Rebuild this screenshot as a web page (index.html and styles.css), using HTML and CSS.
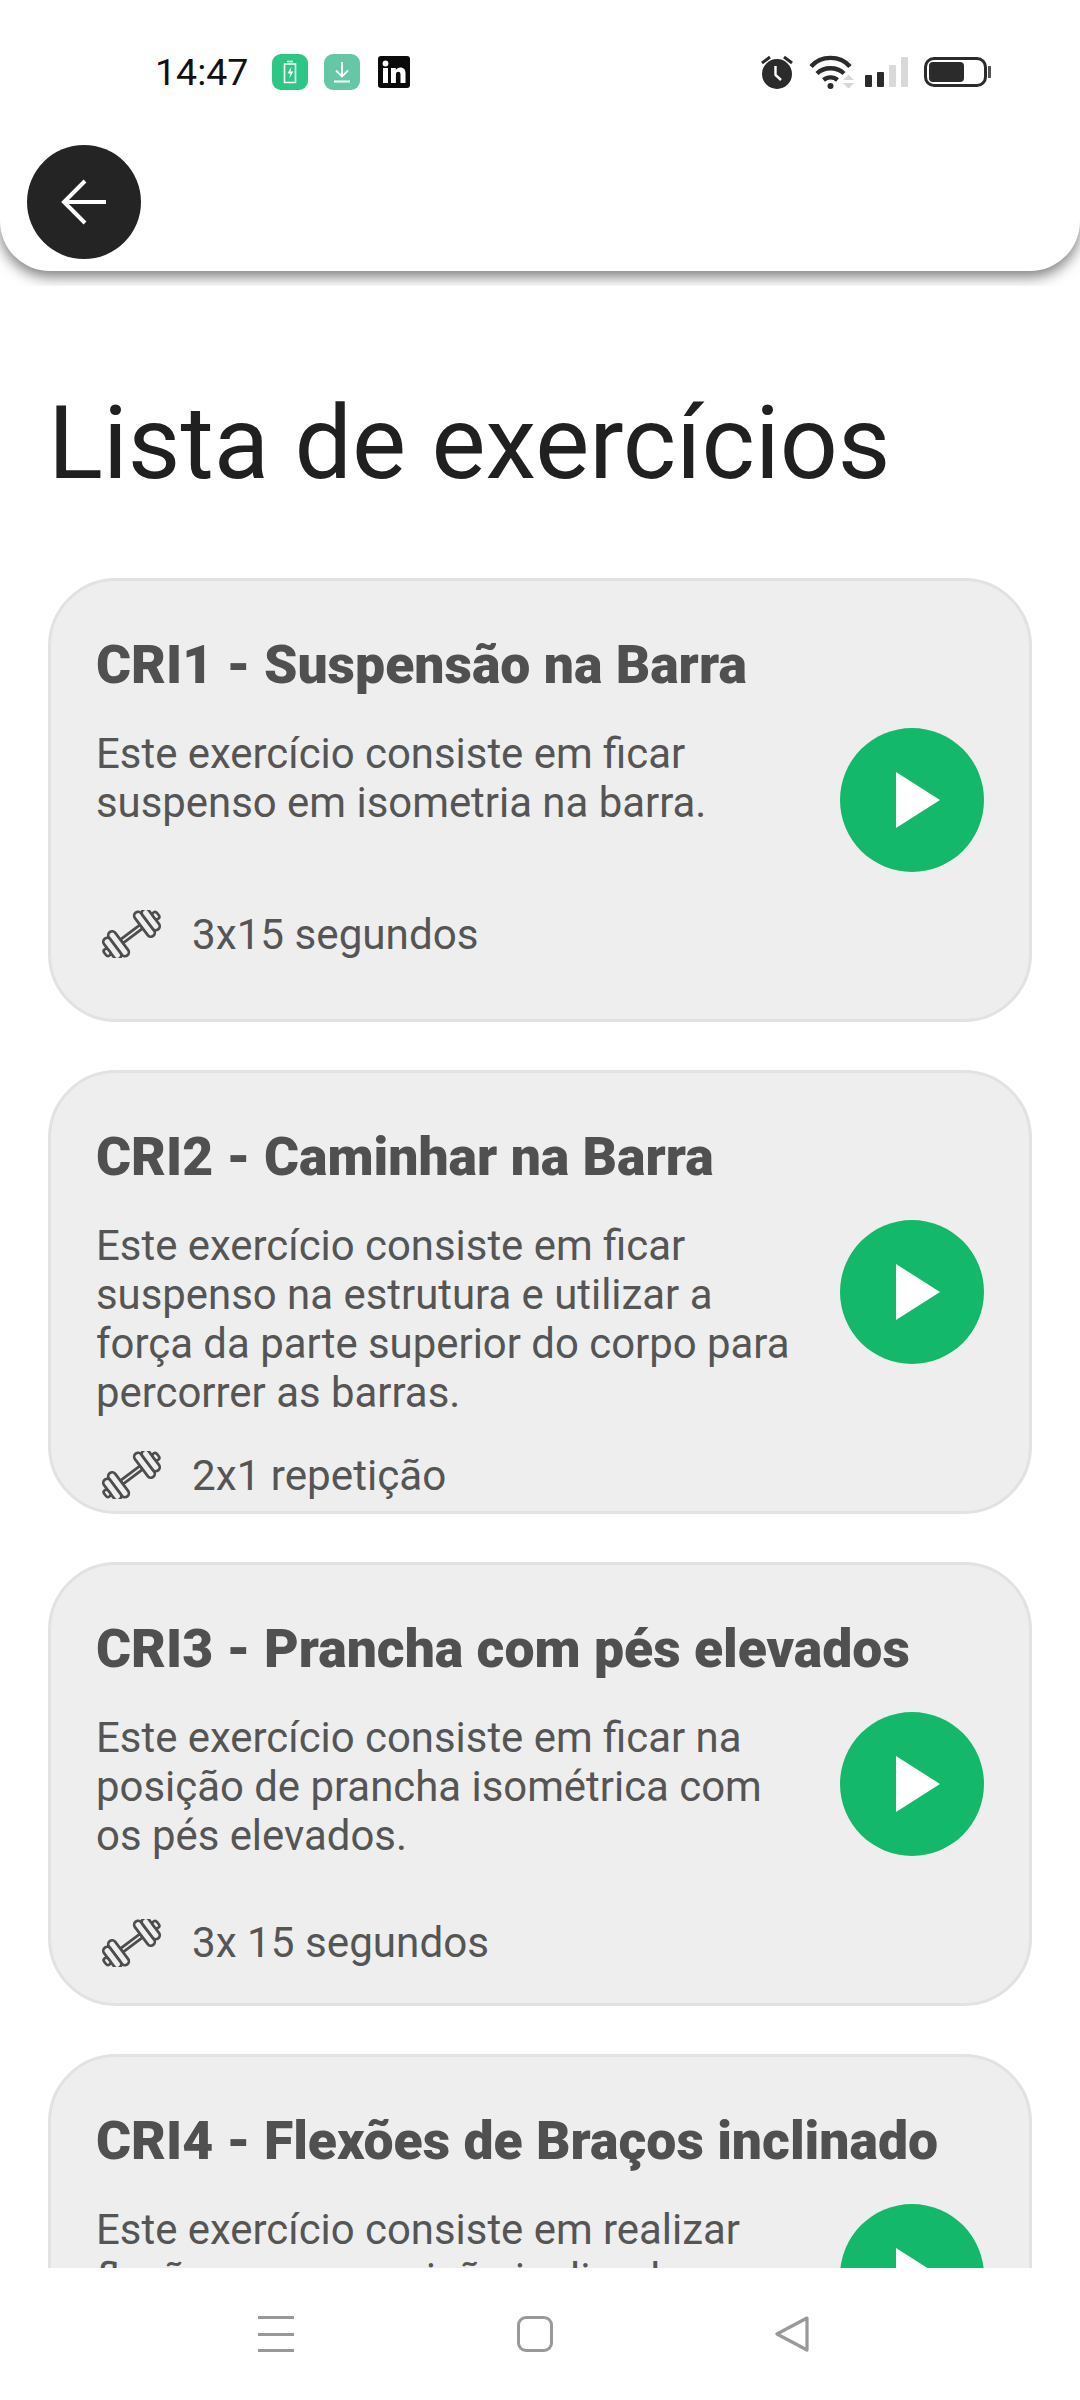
FILE: index.html
```html
<!DOCTYPE html>
<html lang="pt">
<head>
  <meta charset="UTF-8">
  <title>Lista de exercícios</title>
  <link rel="stylesheet" href="styles.css">
</head>
<body>
  <svg class="defs" width="0" height="0">
    <symbol id="halter" viewBox="0 0 60 48">
      <g transform="translate(29.500 24) rotate(-37) scale(1.12)" fill="none" stroke="#4d4d4d" stroke-width="2.400" stroke-linejoin="round">
        <rect x="-11" y="-2" width="22" height="4"/>
        <rect x="-18" y="-13" width="7" height="26" rx="3.500" fill="#eee"/>
        <rect x="-25" y="-11" width="7" height="22" rx="3.500" fill="#eee"/>
        <rect x="-29.500" y="-3.500" width="4.500" height="7" rx="2.200" fill="#eee"/>
        <rect x="11" y="-13" width="7" height="26" rx="3.500" fill="#eee"/>
        <rect x="18" y="-11" width="7" height="22" rx="3.500" fill="#eee"/>
        <rect x="25" y="-3.500" width="4.500" height="7" rx="2.200" fill="#eee"/>
      </g>
    </symbol>
    <symbol id="play" viewBox="0 0 144 144">
      <circle cx="72" cy="72" r="72" fill="#14b86a"/>
      <path d="M56 44 L100 72 L56 100 Z" fill="#fff"/>
    </symbol>
  </svg>

  <div class="app">
    <div class="top">
      <header class="header">
        <div class="status">
          <div class="status-left">
            <span class="time">14:47</span>
            <svg class="chip" width="36" height="36" viewBox="0 0 36 36">
              <rect width="36" height="36" rx="9" fill="#2cc785"/>
              <path d="M15 7.500h6M12.500 10h11v18.500h-11z" fill="none" stroke="#fff" stroke-width="1.600"/>
              <path d="M19.500 12.500l-4 7h2.800l-1 5 4-7h-2.800z" fill="#fff"/>
            </svg>
            <svg class="chip chip-down" width="36" height="36" viewBox="0 0 36 36">
              <rect width="36" height="36" rx="9" fill="#66c7a6"/>
              <path d="M18 8v14M12 16.500l6 6 6-6M10 27.500h16" fill="none" stroke="#fff" stroke-width="1.800"/>
            </svg>
            <svg class="chip chip-in" width="32" height="32" viewBox="0 0 32 32">
              <rect width="32" height="32" rx="3" fill="#0a0a0a"/>
              <rect x="5" y="12" width="5" height="15" fill="#fff"/>
              <circle cx="7.500" cy="7.500" r="2.900" fill="#fff"/>
              <path d="M13 12h4.800v2.200c.9-1.600 2.600-2.600 4.600-2.600 3.600 0 5.100 2.300 5.100 6V27h-5v-8.400c0-1.800-.6-2.900-2.200-2.900-1.700 0-2.400 1.200-2.400 2.900V27H13z" fill="#fff"/>
            </svg>
          </div>
          <div class="status-right">
            <svg width="34" height="34" viewBox="0 0 34 34">
              <circle cx="17" cy="19" r="15" fill="#2b2b2b"/>
              <path d="M15.500 11v9l5.500 5" fill="none" stroke="#fff" stroke-width="2.400"/>
              <path d="M2 8l8-6M32 8l-8-6" stroke="#2b2b2b" stroke-width="3"/>
            </svg>
            <svg class="wifi" width="41" height="34" viewBox="0 0 41 34">
              <path d="M1 11.500C11 0 30 0 40 11.500M7 18.500c7-7 20-7 27 0M13.500 25c4-3.500 10-3.500 14 0" fill="none" stroke="#2b2b2b" stroke-width="4.400"/>
              <circle cx="20.500" cy="31" r="3" fill="#2b2b2b"/>
              <path d="M33 25l5.500-5.500 5.500 5.500zM33 28l5.500 5.500 5.500-5.500z" fill="#d6d6d6"/>
            </svg>
            <div class="signal">
              <span class="bar bar1"></span>
              <span class="bar bar2"></span>
              <span class="bar bar3 off"></span>
              <span class="bar bar4 off"></span>
            </div>
            <div class="battery"><span class="battery-fill"></span></div>
          </div>
        </div>
        <button class="back">
          <svg width="48" height="48" viewBox="0 0 48 48">
            <path d="M3 24H46M25 3L4 24l21 21" fill="none" stroke="#fff" stroke-width="4"/>
          </svg>
        </button>
      </header>
    </div>

    <main class="content">
      <h1>Lista de exercícios</h1>

      <div class="card">
        <h2>CRI1 - Suspensão na Barra</h2>
        <p class="desc">Este exercício consiste em ficar suspenso em isometria na barra.</p>
        <div class="meta"><svg class="halter"><use href="#halter"/></svg><span>3x15 segundos</span></div>
        <svg class="play"><use href="#play"/></svg>
      </div>

      <div class="card">
        <h2>CRI2 - Caminhar na Barra</h2>
        <p class="desc">Este exercício consiste em ficar suspenso na estrutura e utilizar a força da parte superior do corpo para percorrer as barras.</p>
        <div class="meta"><svg class="halter"><use href="#halter"/></svg><span>2x1 repetição</span></div>
        <svg class="play"><use href="#play"/></svg>
      </div>

      <div class="card">
        <h2>CRI3 - Prancha com pés elevados</h2>
        <p class="desc">Este exercício consiste em ficar na posição de prancha isométrica com os pés elevados.</p>
        <div class="meta"><svg class="halter"><use href="#halter"/></svg><span>3x 15 segundos</span></div>
        <svg class="play"><use href="#play"/></svg>
      </div>

      <div class="card">
        <h2>CRI4 - Flexões de Braços inclinado</h2>
        <p class="desc">Este exercício consiste em realizar flexões numa posição inclinada.</p>
        <div class="meta"><svg class="halter"><use href="#halter"/></svg><span>3x10 repetições</span></div>
        <svg class="play"><use href="#play"/></svg>
      </div>
    </main>

    <nav class="navbar">
      <div class="nav-menu"><span></span><span></span><span></span></div>
      <div class="nav-home"></div>
      <svg width="34" height="36" viewBox="0 0 34 36">
        <path d="M32 2 L2 18 L32 34 Z" fill="none" stroke="#999" stroke-width="3.200" stroke-linejoin="round"/>
      </svg>
    </nav>
  </div>
</body>
</html>
```

FILE: styles.css
```css
* {
  box-sizing: border-box;
}

body {
  margin: 0;
  background: #fff;
  font-family: Roboto, sans-serif;
}

.defs {
  position: absolute;
}

.app {
  width: 1080px;
  height: 2400px;
  display: flex;
  flex-direction: column;
  overflow: hidden;
}

.top {
  height: 286px;
  flex: none;
  overflow: hidden;
}

.header {
  height: 271px;
  background: #fff;
  border-radius: 0 0 50px 50px;
  box-shadow: 0 6px 14px rgba(0, 0, 0, 0.5);
  padding: 54px 93px 0 27px;
}

.status {
  height: 36px;
  display: flex;
  justify-content: space-between;
  align-items: center;
  padding-left: 128px;
}

.status-left,
.status-right {
  display: flex;
  align-items: center;
}

.time {
  font-size: 37.500px;
  color: #111;
  width: 117px;
}

.chip-down {
  margin-left: 16px;
}

.chip-in {
  margin-left: 18px;
}

.wifi {
  margin-left: 16px;
  overflow: visible;
}

.signal {
  margin-left: 14px;
  width: 43px;
  height: 30px;
  display: flex;
  align-items: flex-end;
  justify-content: space-between;
}

.bar {
  width: 7px;
  background: #2b2b2b;
  border-radius: 1px;
}

.bar1 { height: 12px; }
.bar2 { height: 15px; }
.bar3 { height: 22px; }
.bar4 { height: 30px; }

.bar.off {
  background: #d9d9d9;
}

.battery {
  margin-left: 16px;
  width: 63px;
  height: 30px;
  border: 3px solid #2b2b2b;
  border-radius: 10px;
  padding: 2px;
  position: relative;
}

.battery::after {
  content: "";
  position: absolute;
  right: -7px;
  top: 6px;
  width: 3px;
  height: 12px;
  background: #555;
}

.battery-fill {
  display: block;
  width: 35px;
  height: 100%;
  background: #2b2b2b;
  border-radius: 4px;
}

.back {
  width: 114px;
  height: 114px;
  margin-top: 55px;
  border: none;
  border-radius: 50%;
  background: #242424;
  display: flex;
  align-items: center;
  justify-content: center;
  padding: 0;
}

.content {
  flex: 1;
  overflow: hidden;
  padding: 0 48px;
}

h1 {
  margin: 90px 0 68px;
  font-size: 102px;
  line-height: 134px;
  font-weight: 400;
  color: #202020;
}

.card {
  height: 444px;
  margin-bottom: 48px;
  padding: 0 45px;
  background: #eee;
  border: 3px solid #e2e2e2;
  border-radius: 68px;
  display: grid;
  grid-template-columns: 1fr 144px;
  grid-template-rows: auto auto 1fr;
  column-gap: 30px;
}

h2 {
  grid-column: 1 / 3;
  grid-row: 1;
  margin: 54px 0 0;
  font-size: 53.500px;
  line-height: 60px;
  font-weight: 900;
  color: #505050;
}

.desc {
  grid-column: 1;
  grid-row: 2;
  margin: 34px 0 22px;
  font-size: 41.900px;
  line-height: 49px;
  color: #555;
}

.meta {
  grid-column: 1;
  grid-row: 3;
  display: flex;
  align-items: center;
  font-size: 42.200px;
  color: #555;
}

.halter {
  width: 60px;
  height: 48px;
  margin-left: 6px;
  margin-right: 30px;
}

.play {
  grid-column: 2;
  grid-row: 1 / 4;
  align-self: center;
  width: 144px;
  height: 144px;
}

.navbar {
  height: 132px;
  flex: none;
  background: #fff;
  display: flex;
  align-items: flex-start;
  justify-content: space-between;
  padding: 48px 271px 0 258px;
}

.nav-menu {
  width: 36px;
  height: 36px;
  display: flex;
  flex-direction: column;
  justify-content: space-between;
}

.nav-menu span {
  height: 3px;
  background: #999;
}

.nav-home {
  width: 36px;
  height: 36px;
  border: 3px solid #999;
  border-radius: 9px;
}
```
